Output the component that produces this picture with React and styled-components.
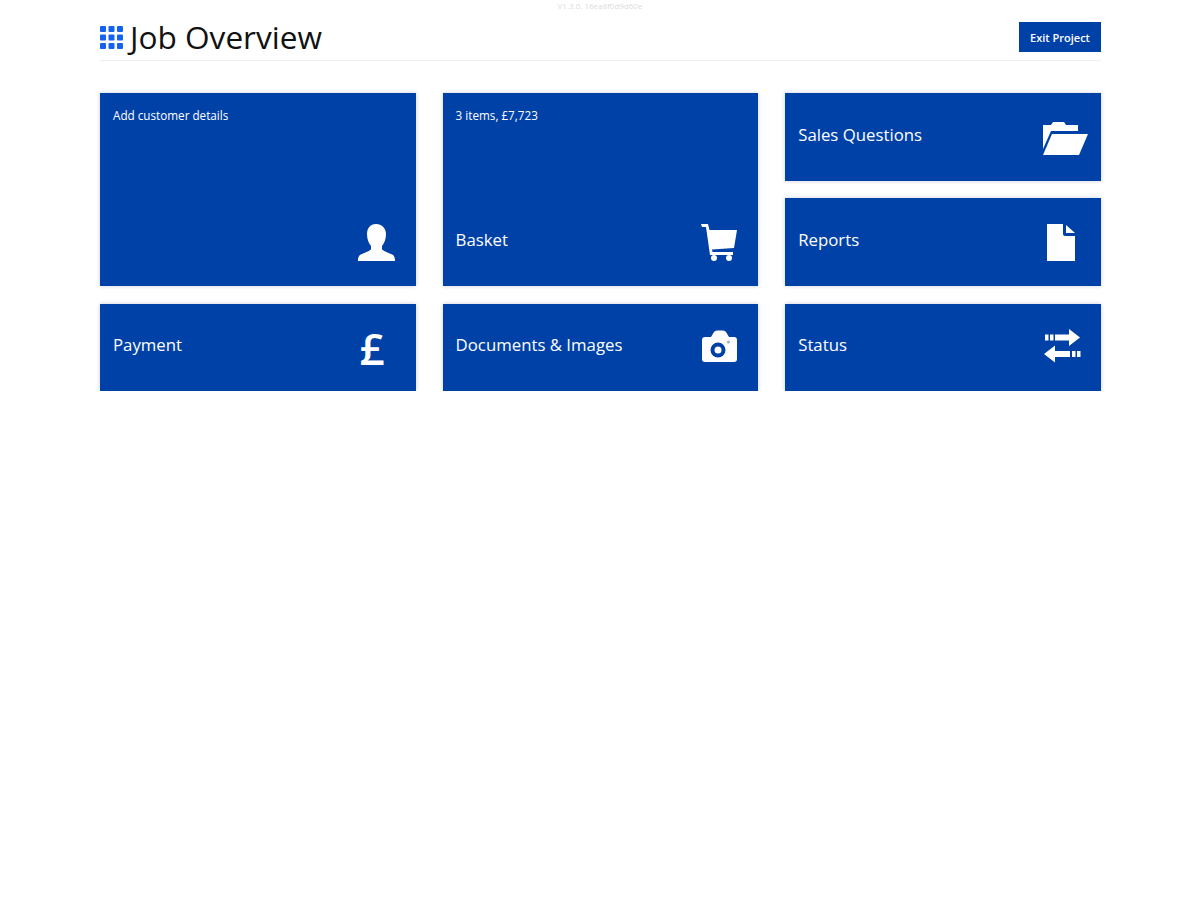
import React from 'react';
import styled, { createGlobalStyle } from 'styled-components';

const GlobalStyle = createGlobalStyle`
  html, body {
    margin: 0;
    padding: 0;
    background: #fff;
    font-family: "Open Sans", "Noto Sans", sans-serif;
  }
`;

const Version = styled.div`
  height: 12px;
  font-size: 8px;
  line-height: 12px;
  text-align: center;
  color: #dcdcdc;
`;

const Page = styled.div`
  width: 1001px;
  margin-left: 100px;
`;

const Header = styled.header`
  display: flex;
  align-items: center;
  justify-content: space-between;
  box-sizing: border-box;
  height: 49px;
  padding-top: 2px;
  border-bottom: 1px solid #eeeeee;
`;

const Title = styled.h1`
  display: flex;
  align-items: center;
  gap: 7px;
  margin: 0;
  font-size: 31.6px;
  line-height: 40px;
  font-weight: 400;
  color: #111;
`;

const ExitButton = styled.button`
  width: 82px;
  height: 30px;
  padding: 0;
  border: none;
  background: #0041a8;
  color: #fff;
  font-family: inherit;
  font-size: 11px;
  font-weight: 600;
`;

const Tiles = styled.div`
  display: grid;
  grid-template-columns: repeat(3, 315.6px);
  grid-template-rows: repeat(3, 87.5px);
  column-gap: 27px;
  row-gap: 17.7px;
  margin-top: 32.3px;
`;

const Tile = styled.div`
  display: flex;
  flex-direction: column;
  justify-content: flex-end;
  grid-row: ${(p) => (p.$tall ? 'span 2' : 'span 1')};
  padding: 0 13px;
  background: #0041a8;
  color: #fff;
  box-shadow: 0 0 4px rgba(0, 30, 90, 0.22);
`;

const Hint = styled.div`
  margin-bottom: auto;
  padding-top: 14px;
  font-size: 11.7px;
  line-height: 16px;
`;

const TileRow = styled.div`
  display: flex;
  align-items: center;
  justify-content: space-between;
  box-sizing: border-box;
  height: 87.5px;
  padding-top: 1.5px;
`;

const Label = styled.span`
  padding-bottom: 7px;
  font-size: 16.8px;
`;

const IconSlot = styled.svg`
  display: block;
  flex: none;
  width: 46px;
  height: 40px;
  fill: #fff;
`;

const PoundGlyph = styled.span`
  display: block;
  flex: none;
  box-sizing: border-box;
  width: 46px;
  padding-left: 3px;
  font-size: 44px;
  line-height: 40px;
  font-weight: 600;
`;

const GridIcon = () => (
  <svg width="23" height="23" viewBox="0 0 23 23" fill="#1463f0">
    {[0, 8.500, 17].flatMap((y) =>
      [0, 8.500, 17].map((x) => <rect key={`${x}-${y}`} x={x} y={y} width="6" height="6" rx="1" />)
    )}
  </svg>
);

const UserIcon = () => (
  <IconSlot viewBox="0 0 46 40">
    <path d="M19 1C13 1 10 5.500 10 11C10 16 11.500 20 14 23L14 26C14 27 10 29 5 31C2 32 1 34 1 38L38 38C38 34 37 32 34 31C29 29 25 27 25 26L25 23C27.500 20 29 16 29 11C29 5.500 25 1 19 1Z" />
  </IconSlot>
);

const CartIcon = () => (
  <IconSlot viewBox="0 0 46 40">
    <path d="M2 1L9 1L10.500 7L38 7L35 25L13 26.500L13.500 29L34 29L34 32L11 32L7 4L3 4Z" />
    <circle cx="15" cy="35" r="3" />
    <circle cx="30" cy="35" r="3" />
  </IconSlot>
);

const FolderIcon = () => (
  <IconSlot viewBox="0 0 46 40">
    <path d="M1 7L9 7L11 4L22 4L24 7L36 7L36 13L9 13L1 31Z" />
    <path d="M10 16L46 16L37 37L1 37Z" />
  </IconSlot>
);

const FileIcon = () => (
  <IconSlot viewBox="0 0 46 40">
    <path d="M5 1L21 1L21 11Q21 13 23 13L33 13L33 38L5 38Z" />
    <path d="M24 2L33 10L24 10Z" />
  </IconSlot>
);

const CameraIcon = () => (
  <IconSlot viewBox="0 0 46 40">
    <path d="M3 12Q3 9 6 9L12 9L15 4Q16 2.500 18 2.500L24 2.500Q26 2.500 27 4L30 9L35 9Q38 9 38 12L38 31Q38 34 35 34L6 34Q3 34 3 31Z" />
    <circle cx="19" cy="22" r="7.500" fill="#0041a8" />
    <circle cx="19" cy="22" r="3.500" />
    <circle cx="29.500" cy="14" r="1.500" fill="#8fb0e0" />
  </IconSlot>
);

const SwapIcon = () => (
  <IconSlot viewBox="0 0 46 40">
    <path d="M27 1L38 9.500L27 18L27 12.500L13 12.500L13 6.500L27 6.500Z" />
    <rect x="3" y="6.500" width="3.500" height="6" />
    <rect x="8" y="6.500" width="3.500" height="6" />
    <path d="M13 17.500L2 26L13 34.500L13 29L28 29L28 23L13 23Z" />
    <rect x="30" y="23" width="3.500" height="6" />
    <rect x="35" y="23" width="3.500" height="6" />
  </IconSlot>
);

const PoundIcon = () => <PoundGlyph>£</PoundGlyph>;

const tiles = [
  { label: '', hint: 'Add customer details', icon: <UserIcon />, tall: true },
  { label: 'Basket', hint: '3 items, £7,723', icon: <CartIcon />, tall: true },
  { label: 'Sales Questions', icon: <FolderIcon /> },
  { label: 'Reports', icon: <FileIcon /> },
  { label: 'Payment', icon: <PoundIcon /> },
  { label: 'Documents & Images', icon: <CameraIcon /> },
  { label: 'Status', icon: <SwapIcon /> },
];

const App = () => (
  <>
    <GlobalStyle />
    <Version>V1.3.0. 16ea8f0d9d60e</Version>
    <Page>
      <Header>
        <Title>
          <GridIcon />
          Job Overview
        </Title>
        <ExitButton>Exit Project</ExitButton>
      </Header>
      <Tiles>
        {tiles.map((t) => (
          <Tile key={t.hint || t.label} $tall={t.tall}>
            {t.hint && <Hint>{t.hint}</Hint>}
            <TileRow>
              <Label>{t.label}</Label>
              {t.icon}
            </TileRow>
          </Tile>
        ))}
      </Tiles>
    </Page>
  </>
);

export default App;
